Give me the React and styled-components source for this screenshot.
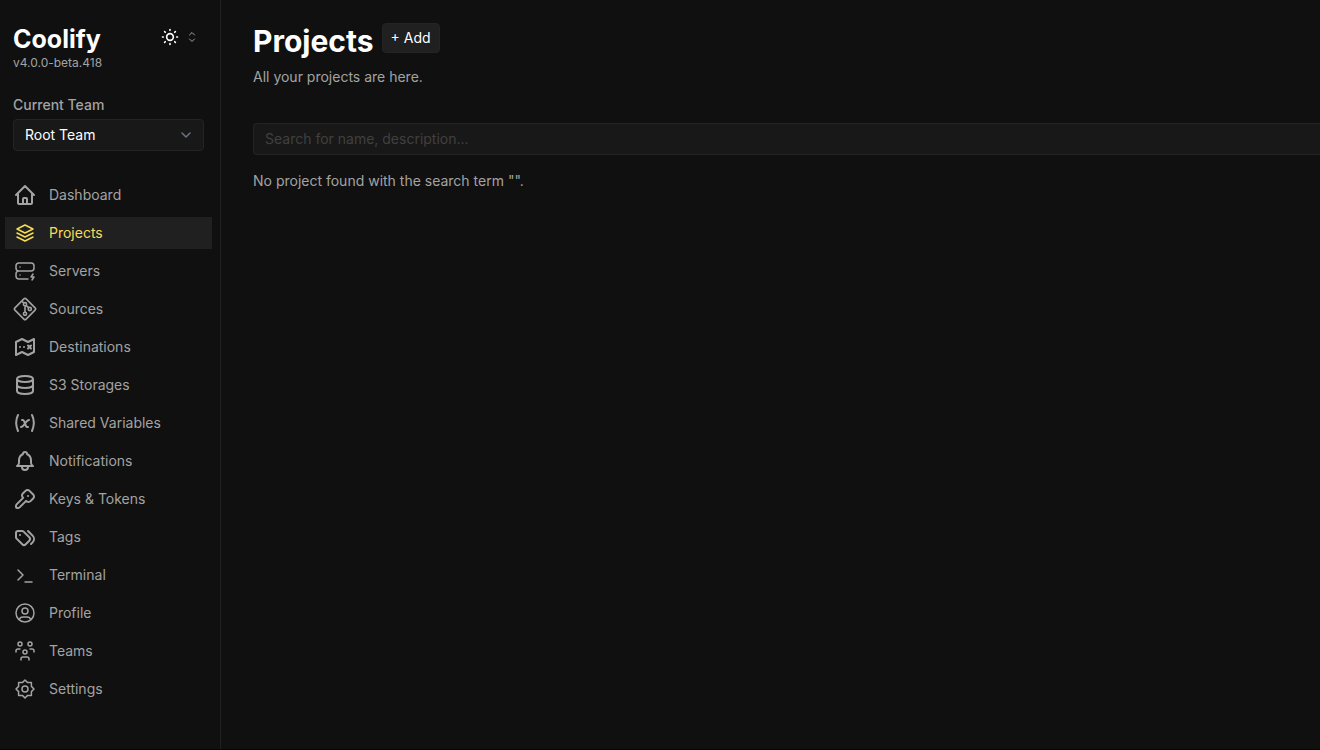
import styled, { createGlobalStyle, css } from "styled-components";

const GlobalStyle = createGlobalStyle`
  *,
  *::before,
  *::after {
    box-sizing: border-box;
  }

  body {
    margin: 0;
    background: #101010;
    color: #a3a3a3;
    font-family: Inter, "Liberation Sans", sans-serif;
    font-size: 14px;
    line-height: 20px;
    -webkit-font-smoothing: antialiased;
  }

  button,
  input,
  select {
    font: inherit;
  }
`;

const Layout = styled.div`
  display: flex;
  min-height: 100vh;
  overflow: hidden;
  border-bottom: 1px solid #080406;
`;

const Sidebar = styled.aside`
  display: flex;
  flex-direction: column;
  flex: none;
  width: 221px;
  padding: 23px 8px 0 5px;
  border-right: 1px solid #202020;
`;

const Header = styled.header`
  display: flex;
  justify-content: space-between;
  padding: 0 8px;
`;

const Brand = styled.div`
  display: flex;
  flex-direction: column;
`;

const BrandName = styled.a`
  color: #fff;
  font-size: 25px;
  font-weight: 700;
  line-height: 32px;
  text-decoration: none;
`;

const Version = styled.a`
  color: #a3a3a3;
  font-size: 12px;
  line-height: 16px;
  text-decoration: none;
`;

const ThemeButton = styled.button`
  display: flex;
  align-items: center;
  align-self: flex-start;
  gap: 4px;
  height: 28px;
  padding: 0 4px 0 0;
  border: 0;
  background: none;
  color: #fff;
  cursor: pointer;
`;

const Team = styled.div`
  display: flex;
  flex-direction: column;
  gap: 4px;
  padding: 24px 8px 28px;
`;

const TeamLabel = styled.label`
  font-weight: 500;
`;

const SelectWrap = styled.div`
  display: grid;
  align-items: center;

  & > * {
    grid-area: 1 / 1;
  }

  & > svg {
    justify-self: end;
    margin-right: 8px;
    pointer-events: none;
  }
`;

const field = css`
  width: 100%;
  height: 32px;
  padding: 0 11px;
  border: 1px solid #242424;
  background: #181818;
  color: #fff;
  outline: none;
`;

const Select = styled.select`
  ${field}
  border-radius: 4px;
  appearance: none;
`;

const Nav = styled.ul`
  display: flex;
  flex-direction: column;
  gap: 6px;
  margin: 0;
  padding: 0;
  list-style: none;
`;

const NavLink = styled.a`
  display: flex;
  align-items: center;
  gap: 12px;
  height: 32px;
  padding: 0 8px;
  color: #a3a3a3;
  text-decoration: none;

  &:hover {
    background: #202020;
  }

  ${(props) =>
    props.$active &&
    css`
      background: #202020;
      color: #f7dc5a;
    `}
`;

const Icon = styled.svg`
  flex: none;
  width: ${(props) => props.$size || 24}px;
  height: ${(props) => props.$size || 24}px;
  color: ${(props) => props.$color || "inherit"};
  fill: none;
  stroke: currentColor;
  stroke-width: ${(props) => props.$stroke || 2};
  stroke-linecap: round;
  stroke-linejoin: round;
`;

const Main = styled.main`
  flex: 1;
  min-width: 0;
  padding: 23px 0 0 32px;
`;

const TitleRow = styled.div`
  display: flex;
  align-items: flex-start;
  gap: 8px;
`;

const Title = styled.h1`
  margin: 0;
  color: #fff;
  font-size: 30px;
  font-weight: 700;
  line-height: 36px;
`;

const AddButton = styled.button`
  height: 30px;
  padding: 0 8px;
  border: 1px solid #242424;
  border-radius: 4px;
  background: #202020;
  color: #fff;
  cursor: pointer;
`;

const Text = styled.p`
  margin: 0;
`;

const Subtitle = styled(Text)`
  padding: 8px 0 36px;
`;

const Search = styled.input`
  ${field}
  display: block;
  margin-bottom: 16px;
  padding-bottom: 2px;
  border-right: 0;
  border-radius: 4px 0 0 4px;

  &::placeholder {
    color: #404040;
    opacity: 1;
  }
`;

const items = [
  {
    name: "Dashboard",
    path: "m3 12l2-2m0 0l7-7l7 7M5 10v10a1 1 0 0 0 1 1h3m10-11l2 2m-2-2v10a1 1 0 0 1-1 1h-3m-6 0a1 1 0 0 0 1-1v-4a1 1 0 0 1 1-1h2a1 1 0 0 1 1 1v4a1 1 0 0 0 1 1m-6 0h6",
  },
  {
    name: "Projects",
    stroke: 1.5,
    path: "M12 4l-8 4l8 4l8-4zM4 12l8 4l8-4M4 16l8 4l8-4",
  },
  {
    name: "Servers",
    stroke: 1.5,
    path: "M3 7a3 3 0 0 1 3-3h12a3 3 0 0 1 3 3v2a3 3 0 0 1-3 3H6a3 3 0 0 1-3-3zm12 13H6a3 3 0 0 1-3-3v-2a3 3 0 0 1 3-3h12M7 8v.01M7 16v.01M20 15l-2 3h3l-2 3",
  },
  {
    name: "Sources",
    viewBox: "0 0 15 15",
    stroke: 1,
    path: "M6.793 1.207a1 1 0 0 1 1.414 0l5.586 5.586a1 1 0 0 1 0 1.414l-5.586 5.586a1 1 0 0 1-1.414 0L1.207 8.207a1 1 0 0 1 0-1.414zM7.5 5.5a1 1 0 1 0 0-2a1 1 0 0 0 0 2zm0 0v4m0 0a1 1 0 1 0 0 2a1 1 0 0 0 0-2zm3-1a1 1 0 1 0 0-2a1 1 0 0 0 0 2zM8.2 5.2l1.6 1.6M6.8 3.8L5.5 2.5",
  },
  {
    name: "Destinations",
    path: "M3 7l6-3l6 3l6-3v13l-6 3l-6-3l-6 3zM7 12v.01M11 12v.01M15 10.5l3 3m0-3l-3 3",
  },
  {
    name: "S3 Storages",
    path: "M4 6a8 3 0 1 0 16 0a8 3 0 1 0-16 0v6a8 3 0 0 0 16 0V6M4 12v6a8 3 0 0 0 16 0v-6",
  },
  {
    name: "Shared Variables",
    path: "M5 4c-2.5 5-2.5 10 0 16m14-16c2.5 5 2.5 10 0 16M9 9h1c1 0 1 1 2.016 3.527C13 15 13 16 14 16h1M8 16c1.5 0 3-2 4-3.5s2.5-3.5 4-3.5",
  },
  {
    name: "Notifications",
    path: "M10 5a2 2 0 1 1 4 0a7 7 0 0 1 4 6v3a4 4 0 0 0 2 3H4a4 4 0 0 0 2-3v-3a7 7 0 0 1 4-6M9 17v1a3 3 0 0 0 6 0v-1",
  },
  {
    name: "Keys & Tokens",
    path: "m16.555 3.843l3.602 3.602a2.877 2.877 0 0 1 0 4.069l-2.643 2.643a2.877 2.877 0 0 1-4.069 0l-.301-.301l-6.558 6.558a2 2 0 0 1-1.239.578L5.172 21H4a1 1 0 0 1-.993-.883L3 20v-1.172a2 2 0 0 1 .467-1.284l.119-.13l6.558-6.558l-.301-.301a2.877 2.877 0 0 1 0-4.069l2.643-2.643a2.877 2.877 0 0 1 4.069 0M15 9h.01",
  },
  {
    name: "Tags",
    path: "M3 8v4.172a2 2 0 0 0 .586 1.414l5.71 5.71a2.41 2.41 0 0 0 3.408 0l3.592-3.592a2.41 2.41 0 0 0 0-3.408l-5.71-5.71A2 2 0 0 0 9.172 6H5a2 2 0 0 0-2 2m15 11l1.592-1.592a4.82 4.82 0 0 0 0-6.816L15 6m-8 4h-.01",
  },
  {
    name: "Terminal",
    stroke: 1.5,
    path: "M5 7l5 5l-5 5M12 19h7",
  },
  {
    name: "Profile",
    stroke: 1.5,
    path: "M3 12a9 9 0 1 0 18 0a9 9 0 1 0-18 0M9 10a3 3 0 1 0 6 0a3 3 0 1 0-6 0m-2.832 8.849A4 4 0 0 1 10 16h4a4 4 0 0 1 3.834 2.855",
  },
  {
    name: "Teams",
    stroke: 1.5,
    path: "M10 13a2 2 0 1 0 4 0a2 2 0 0 0-4 0m-2 8v-1a2 2 0 0 1 2-2h4a2 2 0 0 1 2 2v1M15 5a2 2 0 1 0 4 0a2 2 0 0 0-4 0m2 5h2a2 2 0 0 1 2 2v1M5 5a2 2 0 1 0 4 0a2 2 0 0 0-4 0m-2 8v-1a2 2 0 0 1 2-2h2",
  },
  {
    name: "Settings",
    stroke: 1.5,
    path: "M12 3l2.6 2.6h3.8v3.8L21 12l-2.6 2.6v3.8h-3.8L12 21l-2.6-2.6H5.6v-3.8L3 12l2.6-2.6V5.6h3.8zM9 12a3 3 0 1 0 6 0a3 3 0 0 0-6 0",
  },
];

function TeamSwitcher() {
  return (
    <Team>
      <TeamLabel htmlFor="team">Current Team</TeamLabel>
      <SelectWrap>
        <Select id="team" defaultValue="root">
          <option value="root">Root Team</option>
        </Select>
        <Icon viewBox="0 0 20 20" $size={20} $stroke={1.5} $color="#6b7280">
          <path d="M6 8l4 4l4-4" />
        </Icon>
      </SelectWrap>
    </Team>
  );
}

function NavItem({ item, active }) {
  return (
    <li>
      <NavLink href="#" $active={active}>
        <Icon viewBox={item.viewBox || "0 0 24 24"} $stroke={item.stroke}>
          <path d={item.path} />
        </Icon>
        {item.name}
      </NavLink>
    </li>
  );
}

function App() {
  return (
    <>
      <GlobalStyle />
      <Layout>
        <Sidebar>
          <Header>
            <Brand>
              <BrandName href="#">Coolify</BrandName>
              <Version href="#">v4.0.0-beta.418</Version>
            </Brand>
            <ThemeButton type="button" aria-label="Theme and layout">
              <Icon viewBox="0 0 24 24" $size={20}>
                <path d="M8 12a4 4 0 1 0 8 0a4 4 0 1 0-8 0m-5 0h1m8-9v1m8 8h1m-9 8v1M5.6 5.6l.7.7m12.1-.7l-.7.7m0 11.4l.7.7m-12.1-.7l-.7.7" />
              </Icon>
              <Icon viewBox="0 0 24 24" $size={16} $stroke={1.5} $color="#a3a3a3">
                <path d="M8.25 15L12 18.75L15.75 15m-7.5-6L12 5.25L15.75 9" />
              </Icon>
            </ThemeButton>
          </Header>

          <TeamSwitcher />

          <nav>
            <Nav>
              {items.map((item) => (
                <NavItem
                  key={item.name}
                  item={item}
                  active={item.name === "Projects"}
                />
              ))}
            </Nav>
          </nav>
        </Sidebar>

        <Main>
          <TitleRow>
            <Title>Projects</Title>
            <AddButton type="button">+ Add</AddButton>
          </TitleRow>
          <Subtitle>All your projects are here.</Subtitle>
          <Search
            type="search"
            aria-label="Search projects"
            placeholder="Search for name, description..."
          />
          <Text>No project found with the search term "".</Text>
        </Main>
      </Layout>
    </>
  );
}

export default App;
